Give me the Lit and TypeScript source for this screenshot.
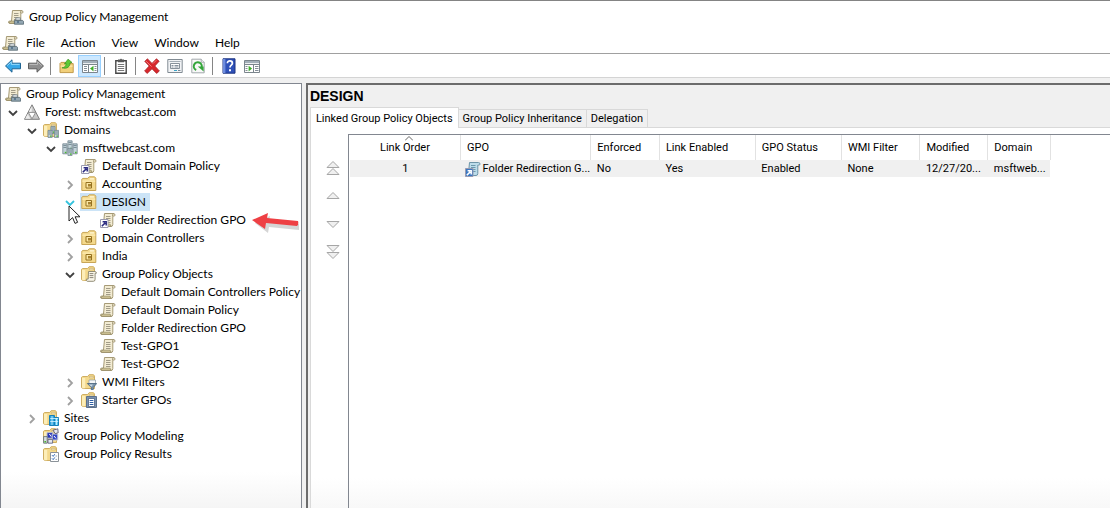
import { LitElement, html, css, svg, nothing } from "lit";
import { customElement, property, state } from "lit/decorators.js";
import { classMap } from "lit/directives/class-map.js";

const scroll = svg`
  <path d="M4.5 1.5h9q1.5 0 1.5 1.6 0 1-1.2 1h-1v8.4q0 2-1.8 2h-9q-1.5 0-1.5-1.4 0-1 1-1h2z" fill="#f3ecd3" stroke="#a69a76"/>
  <path d="M3 12.2h7.2q0 2 1.2 2H2.2q-1.2 0-1.1-1.2z" fill="#dccf9f" stroke="#8e845f" stroke-width=".7"/>
  <path d="M12.6 4V2.6q.2-1 1.2-.9" fill="none" stroke="#8e845f" stroke-width=".8"/>
  <path d="M6 4.5h4.5M6 6.5h4.5M6 8.5h4.5M6 10.5h4.5" stroke="#a29c88"/>`;
const blueScroll = svg`
  <path d="M4.5 1.5h9q1.5 0 1.5 1.6 0 1-1.2 1h-1v8.4q0 2-1.8 2h-9q-1.5 0-1.5-1.4 0-1 1-1h2z" fill="#bcdcea" stroke="#6c94a8"/>
  <path d="M6 4.5h4.5M6 6.5h4.5M6 8.5h4.5M6 10.5h4.5" stroke="#6b98ad"/>`;
const shortcut = (fill: string, ink: string) => svg`
  <path d="M.5 7.500h7.500v8H.5z" fill=${fill} stroke="#9a9ab0"/>
  <path d="M1.800 14.300l3.400-3.400M2.600 9.800h3.600v3.600" fill="none" stroke=${ink} stroke-width="1.500"/>`;
const folder = svg`
  <path d="M.5 3.3l1-.8h5.2l1.4-1.8h4.4l1 1.4v12.4H2.2L.5 13.6z" fill="#f4d98c" stroke="#cfae62"/>
  <path d="M1 4h3.2v10.2H2.2L1 13.4z" fill="#fdeeb8"/>
  <path d="M8.4 2.4h4v1.4h-4z" fill="#fff8dc" stroke="#b99a55" stroke-width=".5"/>`;
const tower = (x: number, y: number, h: number) => svg`
  <path d="M${x + 0.4} ${y + 0.4}h4.2v${h}h-4.2z" fill="#c3d3da" stroke="#6d818b" stroke-width=".8"/>
  <path d="M${x + 1} ${y + 2}h3M${x + 1} ${y + 4}h3" stroke="#5d737e" stroke-width=".8"/>
  <path d="M${x + 2.4} ${y + h - 1.6}h1.6v1.4h-1.6z" fill="#4cb82e"/>`;

const icons: Record<string, unknown> = {
  console: svg`${scroll}
    <path d="M7.8 8.8h4.6v2.4H7.8z" fill="#eef2f4" stroke="#6c7880" stroke-width=".8"/>
    <path d="M6.4 11.4h8.2l1 1.2v2.6H6.4z" fill="#93a6b2" stroke="#52646f" stroke-width=".8"/>
    <path d="M10 12v2" stroke="#2b4f6e"/>`,
  forest: svg`
    <path d="M8 .8l7.500 14.500H.5z" fill="#c9c9c9" stroke="#7e7e7e" stroke-linejoin="round"/>
    <path d="M7.600 2.500v5.500H4.800z" fill="#f4f4f4"/>
    <path d="M4.400 8.400h7.200L8 14.800z" fill="#fff" stroke="#7e7e7e" stroke-width=".8"/>
    <path d="M3.600 10l2.800 4.800H1.200z" fill="#ececec"/>`,
  domains: svg`${folder}${tower(7.5, 4, 7)}${tower(4.6, 8, 7)}${tower(11, 8, 7)}`,
  domain: svg`${tower(5.5, 0.4, 9)}${tower(0.4, 3.4, 10)}${tower(10.6, 3.4, 10)}${tower(5.5, 8, 7)}`,
  link: svg`${scroll}${shortcut("#fff", "#2a2a80")}`,
  blueLink: svg`${blueScroll}${shortcut("#3a78c2", "#fff")}`,
  gpo: scroll,
  ou: svg`
    <path d="M.8 3.2l1-.8h5L8.2.8h5.4l1.200 1.400v12.300H.8z" fill="#f4d98c" stroke="#c8a556"/>
    <path d="M8.8 2.300h4.200v1.200H8.800z" fill="#fff9e0"/>
    <path d="M1.300 4.600h13v1H1.300z" fill="#fff0bd"/>
    <path d="M5 6.500h5.500v5.500H5z" fill="#fbe6a4" stroke="#94701f"/>
    <path d="M7 8h3v2.500H7z" fill="#a8832f"/>`,
  gpoFolder: svg`${folder}
    <path d="M7.5 5.5h6.8q1.2.2 1 1.8h-1.2v6q0 2-1.8 2H6.2q-1.4-.6-.8-2.2h1.8z" fill="#f8f5e8" stroke="#87826c" stroke-width=".9"/>
    <path d="M8.6 7.6h3.8M8.6 9.6h3.8M8.6 11.6h3.8" stroke="#7f7b6d" stroke-width=".9"/>`,
  wmi: svg`${folder}
    <path d="M8 6h6.5v4H8z" fill="#f5f7f8" stroke="#8999a4" stroke-width=".7"/>
    <path d="M6.3 9.5h9.4l-3.4 4v2l-2 .4v-2.4z" fill="#7a94ac" stroke="#47637c" stroke-width=".8"/>
    <path d="M8 10.4h4l-1.6 2.4z" fill="#cad9e4"/>`,
  starter: svg`${folder}
    <path d="M5.5 4.5h10v11h-10z" fill="#7a91ad" stroke="#5d718d"/>
    <path d="M7.5 6.5h6v8h-6z" fill="#fff" stroke="#3f577b" stroke-width=".7"/>
    <path d="M8.6 8.5h3.8M8.6 10.5h3.8M8.6 12.5h3.8" stroke="#2e5ea4"/>`,
  sites: svg`${folder}
    <path d="M6.5 5.5h5v10h-5z" fill="#2aa1dc" stroke="#1780b8"/>
    <path d="M11.5 7.5h4v8h-4z" fill="#57c3ee" stroke="#1780b8"/>
    <path d="M7.2 8.5h8M7.2 11.5h8M9 6v9M13.5 8v7" stroke="#dcf5ff" stroke-width=".8"/>`,
  modeling: svg`${folder}
    <path d="M4 4.6h6v5.6H4z" fill="#2634b8" stroke="#b9bdcc"/>
    <path d="M9.2 6h5.6v6H9.2z" fill="#3346c4" stroke="#c7cbd8"/>
    <path d="M10 2.2l4.8-1.4.4 4-3 .8z" fill="#e9e9ef" stroke="#4a4a66" stroke-width=".8"/>
    <path d="M.6 8.6h3.6v6.6H.6z" fill="#d8dee2" stroke="#5d676e" stroke-width=".8"/>
    <path d="M5 11.4h4.6v3.8H5z" fill="#e4e6ee" stroke="#54587c" stroke-width=".8"/>
    <path d="M6.4 6l1.8 2.6M11 8l2 2.4" stroke="#fff"/>
    <path d="M1.4 13h1.6v1.4H1.4z" fill="#4cb82e"/>`,
  results: svg`${folder}
    <path d="M7.5 6.5h8v9h-8z" fill="#fff" stroke="#8b9299"/>
    <path d="M9 9.2l1.2 1.2 1.6-2.2M9 12.4l1.2 1.2 1.6-2.2" fill="none" stroke="#2d66b4"/>
    <path d="M12.5 10h1.6M12.5 13.4h1.6" stroke="#9aa6b2"/>`,
  back: svg`
    <path d="M.5 8L7 1.800v3.400h8.500v5.600H7v3.400z" fill="#36a7e8" stroke="#1f6391" stroke-linejoin="round"/>
    <path d="M2.2 7.6L6.4 3.800v2.600h8.200" fill="none" stroke="#92d8fb"/>`,
  forward: svg`
    <path d="M15.500 8L9 1.800v3.400H.5v5.600H9v3.400z" fill="#8f8f8f" stroke="#5c5c5c" stroke-linejoin="round"/>
    <path d="M1.400 6.400h8.200V3.800l4.200 3.800" fill="none" stroke="#bdbdbd"/>`,
  up: svg`
    <path d="M1 5.4l1-1h4.2l1.2 1.2h6.8v9H1z" fill="#f1cf79" stroke="#c19a4a"/>
    <path d="M1.6 7.6h12v1H1.6z" fill="#fff0bd"/>
    <path d="M3 9.8c3.4-.4 4-2.4 4-4.4L5.4 6 9 1.2 13 4.4l-2 .5c.2 3.8-3 6.4-8 4.9z" fill="#5cc936" stroke="#37911c" stroke-width=".7"/>`,
  treePane: svg`
    <path d="M.5 2.5h15v12H.5z" fill="#fff" stroke="#7b858d"/><path d="M1 3h14v2.200H1z" fill="#a3afb9"/>
    <path d="M1 6.500h14M6.5 7v7.5" stroke="#7b858d"/>
    <path d="M2 8.5h3M2 10.5h3M2 12.5h3M12.500 8.500h2M12.500 10.500h2M12.500 12.500h2" stroke="#848e98"/>
    <path d="M11.500 7.800v5.600L8 10.600z" fill="#3fae2a"/>`,
  actionPane: svg`
    <path d="M.5 2.5h15v12H.5z" fill="#fff" stroke="#7b858d"/><path d="M1 3h14v2.200H1z" fill="#a3afb9"/>
    <path d="M1 6.500h14M9.500 7v7.500" stroke="#7b858d"/>
    <path d="M11 8.500h3.500M11 10.500h3.500M11 12.500h3.500M1.500 8.500h2M1.500 10.500h2M1.500 12.500h2" stroke="#848e98"/>
    <path d="M4.600 7.800v5.600l3.500-2.800z" fill="#3fae2a"/>`,
  clipboard: svg`
    <path d="M2.8 2.8h10.4v12.4H2.8z" fill="#fff" stroke="#474747" stroke-width="1.4"/>
    <path d="M5 1.6h2L8 .6l1 1h2v2.600H5z" fill="#565656"/>
    <path d="M4.8 6.5h6.4M4.8 8.5h6.4M4.8 10.5h6.4M4.8 12.5h6.4" stroke="#767676"/>`,
  remove: svg`
    <path d="M3.4.8L8 5.4 12.4.8l2.8 2.4L10.8 8l4.600 5-2.800 2.400L8 10.800l-4.800 4.600L.6 13l4.600-5L.8 3.400z" fill="#d8262b" stroke="#a82a2e" stroke-width=".8" stroke-linejoin="round"/>
    <path d="M2.2 3.2l5.4 5.4M12.4 2.2L9 5.6" stroke="#f4787a"/>`,
  properties: svg`
    <path d="M.8 1.5h14.4v13H.8z" fill="#f2f4f6" stroke="#818b93"/>
    <path d="M2.5 3.500h11" stroke="#a3acb4"/>
    <path d="M3.5 5.5h9v5h-9z" fill="#fff" stroke="#87919a"/>
    <path d="M4.500 7.500h2M4.500 9h2M7.500 7.500h4M7.500 9h4" stroke="#778592" stroke-width=".9"/>
    <path d="M7 12.500h3" stroke="#38a4c8"/><path d="M11 12.500h2.500" stroke="#7a8894"/>`,
  refresh: svg`
    <path d="M1.8 1.200h9.400l3 3v10.600H1.800z" fill="#f8f8f8" stroke="#a2a8ac"/>
    <path d="M11.200 1.200v3h3" fill="#fff" stroke="#a2a8ac"/>
    <path d="M6.200 12A4 4 0 1 1 11.600 9.500" fill="none" stroke="#33a53a" stroke-width="2"/>
    <path d="M7.800 8.600h5.800v5z" fill="#33a53a"/>`,
  help: svg`
    <path d="M2 .8h12v14.4H2z" fill="#2f51b8" stroke="#1c3380"/>
    <path d="M2 1h2.400v14H2z" fill="#6f8ddd"/>
    <path d="M6.4 5.2c0-3.2 5-3 5 0 0 1.900-2.400 2-2.400 4.200" fill="none" stroke="#fff" stroke-width="1.700"/>
    <path d="M8 11.2h2v2H8z" fill="#fff"/>`,
};

const icon = (name: string) =>
  html`<svg class="icon" viewBox="0 0 16 16" aria-hidden="true">${icons[name]}</svg>`;

interface TreeItem {
  label: string;
  icon: string;
  open?: boolean;
  hover?: boolean;
  callout?: boolean;
  children?: TreeItem[];
}

const gpo = (label: string): TreeItem => ({ label, icon: "gpo" });

const forest: TreeItem = {
  label: "Forest: msftwebcast.com", icon: "forest", open: true,
  children: [
    { label: "Domains", icon: "domains", open: true, children: [
      { label: "msftwebcast.com", icon: "domain", open: true, children: [
        { label: "Default Domain Policy", icon: "link" },
        { label: "Accounting", icon: "ou", children: [] },
        { label: "DESIGN", icon: "ou", open: true, hover: true, children: [
          { label: "Folder Redirection GPO", icon: "link", callout: true },
        ] },
        { label: "Domain Controllers", icon: "ou", children: [] },
        { label: "India", icon: "ou", children: [] },
        { label: "Group Policy Objects", icon: "gpoFolder", open: true, children: [
          gpo("Default Domain Controllers Policy"),
          gpo("Default Domain Policy"),
          gpo("Folder Redirection GPO"),
          gpo("Test-GPO1"),
          gpo("Test-GPO2"),
        ] },
        { label: "WMI Filters", icon: "wmi", children: [] },
        { label: "Starter GPOs", icon: "starter", children: [] },
      ] },
    ] },
    { label: "Sites", icon: "sites", children: [] },
    { label: "Group Policy Modeling", icon: "modeling" },
    { label: "Group Policy Results", icon: "results" },
  ],
};

@customElement("gpm-tree-item")
class GpmTreeItem extends LitElement {
  @property({ attribute: false }) item!: TreeItem;
  @state() private open = false;

  static styles = css`
    :host { display: block; }
    .row { position: relative; display: flex; align-items: center; height: 18px; }
    .toggle, .blank { flex: none; width: 16px; height: 16px; margin-right: 2px; }
    .toggle { display: block; padding: 0; border: 0; background: none; color: #404040; }
    .toggle.closed { color: #a0a0a0; }
    .toggle.hover { color: #35c3dd; }
    .toggle svg { display: block; width: 16px; height: 16px; }
    .label { display: flex; align-items: center; gap: 5px; height: 18px; padding: 0 4px 0 1px; white-space: nowrap; }
    .label.selected { background: #cce4f7; }
    .icon { flex: none; width: 16px; height: 16px; }
    .children { padding-left: 19px; }
    .pointer { position: absolute; left: 6px; top: 12px; width: 13px; height: 20px; z-index: 2; }
    .callout { position: absolute; left: 170px; top: 1px; width: 52px; height: 24px; z-index: 2; }
  `;

  connectedCallback() {
    super.connectedCallback();
    this.open = !!this.item.open;
  }

  render() {
    const { item, open } = this;
    return html`
      <div class="row">
        ${item.children
          ? html`<button
              class=${classMap({ toggle: true, closed: !open, hover: !!item.hover })}
              aria-label=${`Toggle ${item.label}`}
              aria-expanded=${open ? "true" : "false"}
              @click=${() => (this.open = !open)}
            ><svg viewBox="0 0 16 16"><path d=${open ? "M4 7l4 4 4-4" : "M6 5l4 4-4 4"} fill="none" stroke="currentColor" stroke-width="1.8"/></svg></button>`
          : html`<span class="blank"></span>`}
        <span class=${classMap({ label: true, selected: !!item.hover })}>${icon(item.icon)}<span>${item.label}</span></span>
        ${item.hover
          ? html`<svg class="pointer" viewBox="0 0 13 20"><path d="M1 1v15l3.6-3.4L7 18.4l2.6-1.1-2.5-5.5H12z" fill="#fff" stroke="#222"/></svg>`
          : nothing}
        ${item.callout
          ? html`<svg class="callout" viewBox="0 0 52 24">
              <path d="M4 11l15-7-1 5 30 3v6l-30-3-1 6z" fill="#888" opacity=".35"/>
              <path d="M1 8l16-7-1 5 31 3q1 3-1 5l-31-3-1 6z" fill="#ee4044"/></svg>`
          : nothing}
      </div>
      ${open && item.children
        ? html`<div class="children">${item.children.map((c) => html`<gpm-tree-item .item=${c}></gpm-tree-item>`)}</div>`
        : nothing}
    `;
  }
}

const columns = ["Link Order", "GPO", "Enforced", "Link Enabled", "GPO Status", "WMI Filter", "Modified", "Domain"];
const links = [["1", "Folder Redirection G...", "No", "Yes", "Enabled", "None", "12/27/20...", "msftweb..."]];
const tabs = ["Linked Group Policy Objects", "Group Policy Inheritance", "Delegation"];
const menus = ["File", "Action", "View", "Window", "Help"];
const tools: [string, string][][] = [
  [["back", "Back"], ["forward", "Forward"]],
  [["up", "Up one level"], ["treePane", "Show or hide console tree"]],
  [["clipboard", "Paste"]],
  [["remove", "Delete"], ["properties", "Properties"], ["refresh", "Refresh"]],
  [["help", "Help"], ["actionPane", "Show or hide action pane"]],
];
const orderButtons: [string, string][] = [
  ["Move link to top", "M10 2L4 8h12zM10 9L4 15h12z"],
  ["Move link up", "M10 5L4 11h12z"],
  ["Move link down", "M4 6h12l-6 6z"],
  ["Move link to bottom", "M4 2h12l-6 6zM4 9h12l-6 6z"],
];

@customElement("app-root")
class AppRoot extends LitElement {
  @state() private tab = 0;

  static styles = css`
    :host {
      display: flex; flex-direction: column; min-height: 100vh; box-sizing: border-box;
      border-top: 1px solid #848484; background: #f0f0f0; color: #000;
      font: 12px/18px Lato, sans-serif;
    }
    button { font: inherit; color: inherit; border: 0; background: none; padding: 0; }
    .icon { flex: none; display: block; width: 16px; height: 16px; }
    .title { display: flex; align-items: center; gap: 5px; height: 31px; padding-left: 8px; background: #fff; }
    .menu { display: flex; align-items: center; height: 21px; padding-left: 2px; background: #fff; border-bottom: 1px solid #a0a0a0; }
    .menu button { padding: 0 8px; height: 20px; line-height: 20px; }
    .tools { display: flex; align-items: center; height: 22px; padding: 1px 0 0 1px; background: #fff; border-bottom: 1px solid #d4d4d4; }
    .group { display: flex; align-items: center; }
    .group + .group::before { content: ""; width: 1px; height: 18px; margin: 0 4px 0 3px; background: #858585; }
    .tool { display: grid; place-items: center; width: 23px; height: 22px; }
    .tool.on { background: #cce8ff; box-shadow: inset 0 0 0 1px #99d1ff; }
    .panes { flex: 1; display: flex; gap: 4px; padding-top: 5px; }
    .tree {
      flex: none; width: 27.2%; box-sizing: border-box; overflow: hidden; padding: 1px 0 0 4px;
      border: 1px solid #828790; border-bottom: 0;
      background: linear-gradient(to top, #f5f5f5, #fff 36px);
    }
    .root { display: flex; align-items: center; gap: 5px; height: 18px; }
    .detail { flex: 1; min-width: 0; display: flex; flex-direction: column; border: 2px solid #6c6c6c; border-right: 0; border-bottom: 0; }
    h1 { margin: 0; padding: 2px; font: bold 14px/18px "Liberation Sans", sans-serif; color: #000; }
    .tabs { display: flex; align-items: flex-end; padding-left: 2px; font: 11px/17px Roboto, sans-serif; }
    .tabs button { height: 18px; padding: 0 4px; border: 1px solid #d9d9d9; border-left: 0; border-bottom: 0; white-space: nowrap; }
    .tabs .active { height: 21px; padding: 0 5px; background: #fff; border-left: 1px solid #d9d9d9; margin-bottom: -1px; position: relative; z-index: 1; }
    .page {
      flex: 1; display: flex; margin-left: 2px; padding-top: 6px; border: 1px solid #d9d9d9; border-right: 0; border-bottom: 0;
      background: linear-gradient(to top, #f8f8f8, #fff 30px);
    }
    .order { flex: none; width: 37px; padding: 24px 0 0 12px; box-sizing: border-box; display: flex; flex-direction: column; gap: 8px; }
    .order button { width: 20px; height: 20px; }
    .order svg { display: block; width: 20px; height: 20px; }
    .list { flex: 1; min-width: 0; overflow: hidden; border: 1px solid #828790; border-right: 0; border-bottom: 0; padding-left: 1px; font: 11px/16px Roboto, sans-serif; }
    table { width: 92.2%; table-layout: fixed; border-collapse: collapse; }
    th, td { box-sizing: border-box; padding: 0 0 0 6px; font-weight: normal; text-align: left; white-space: nowrap; overflow: hidden; }
    th { height: 25px; border-right: 1px solid #e2e2e2; position: relative; }
    td { height: 17px; background: #f0f0f0; }
    .c0 { width: 15.8%; text-align: center; padding-left: 0; }
    .c1 { width: 18.6%; }
    .c2 { width: 9.8%; }
    .c3 { width: 13.7%; }
    .c4 { width: 12.3%; }
    .c5 { width: 11.2%; }
    .c6 { width: 9.7%; }
    .c7 { width: 8.9%; }
    td.c1 { padding-left: 4px; }
    .cell { display: flex; align-items: center; gap: 2px; }
    .sort { position: absolute; left: 50%; top: 1px; width: 8px; height: 5px; }
  `;

  render() {
    return html`
      <header class="title">${icon("console")}<span>Group Policy Management</span></header>
      <nav class="menu">${icon("console")}${menus.map((m) => html`<button>${m}</button>`)}</nav>
      <div class="tools" role="toolbar">
        ${tools.map((g) => html`<div class="group">${g.map(([name, label]) => html`
          <button class=${classMap({ tool: true, on: name === "treePane" })} aria-label=${label}>${icon(name)}</button>`)}</div>`)}
      </div>
      <main class="panes">
        <section class="tree">
          <div class="root">${icon("console")}<span>Group Policy Management</span></div>
          <gpm-tree-item .item=${forest}></gpm-tree-item>
        </section>
        <section class="detail">
          <h1>DESIGN</h1>
          <div class="tabs" role="tablist">
            ${tabs.map((t, i) => html`<button role="tab" aria-selected=${i === this.tab ? "true" : "false"}
              class=${classMap({ active: i === this.tab })} @click=${() => (this.tab = i)}>${t}</button>`)}
          </div>
          <div class="page">
            <div class="order">
              ${orderButtons.map(([label, d]) => html`<button aria-label=${label}>
                <svg viewBox="0 0 20 17"><path d=${d} fill="#f0f0f0" stroke="#a6a6a6"/></svg></button>`)}
            </div>
            <div class="list">
              <table>
                <thead><tr>${columns.map((c, i) => html`<th class="c${i}">${c}${i === 0
                  ? html`<svg class="sort" viewBox="0 0 8 5"><path d="M0 4.500L4 .5l4 4" fill="none" stroke="#666"/></svg>` : nothing}</th>`)}</tr></thead>
                <tbody>${links.map((r) => html`<tr>${r.map((v, i) => html`<td class="c${i}">${i === 1
                  ? html`<div class="cell">${icon("blueLink")}<span>${v}</span></div>` : v}</td>`)}</tr>`)}</tbody>
              </table>
            </div>
          </div>
        </section>
      </main>
    `;
  }
}
